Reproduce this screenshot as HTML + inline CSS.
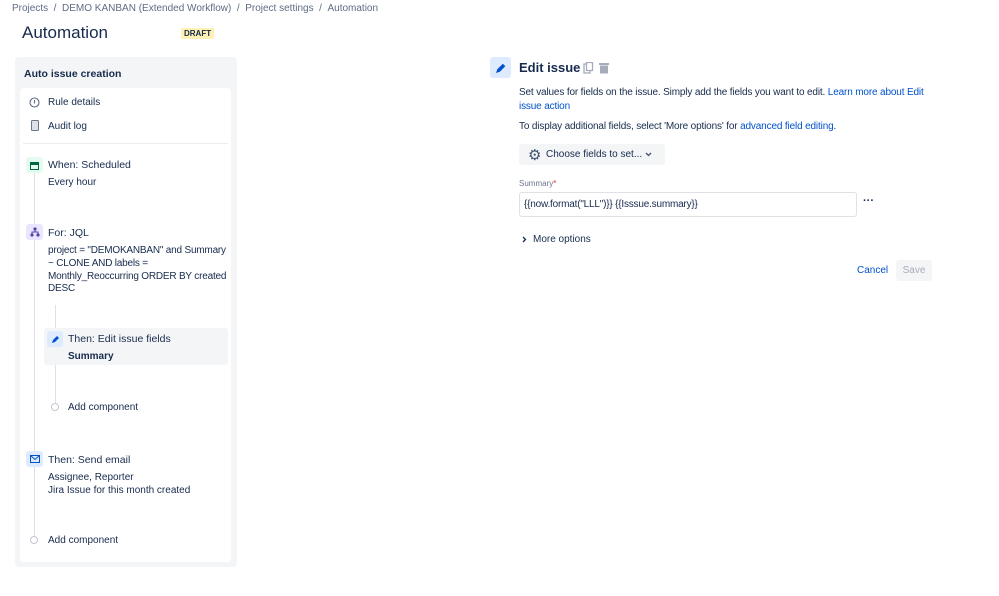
<!DOCTYPE html>
<html><head><style>
*{margin:0;padding:0;box-sizing:border-box}
body{width:999px;height:596px;background:#fff;font-family:"Liberation Sans",sans-serif;color:#172b4d;position:relative;overflow:hidden;font-size:10px}
.a{position:absolute;white-space:nowrap}
.ic{position:absolute;border-radius:3px;display:flex;align-items:center;justify-content:center}
.lnk{color:#0052cc}
.c{position:absolute;width:8px;height:8px;border:1px solid #c1c7d0;border-radius:50%;background:#fff}
</style></head><body>
<div class="a" style="left:12px;top:3px;color:#5e6c84;font-size:10px">Projects &nbsp;/ &nbsp;DEMO KANBAN (Extended Workflow) &nbsp;/ &nbsp;Project settings &nbsp;/ &nbsp;Automation</div>
<div class="a" style="left:22px;top:23px;font-size:17px">Automation</div>
<div class="a" style="left:181px;top:28px;background:#fff0b3;font-size:8px;font-weight:bold;padding:1px 3px;border-radius:2px;color:#172b4d">DRAFT</div>

<div class="a" style="left:15px;top:57px;width:222px;height:510px;background:#f4f5f7;border-radius:4px"></div>
<div class="a" style="left:24px;top:68px;font-weight:bold;font-size:10.5px">Auto issue creation</div>
<div class="a" style="left:20px;top:88px;width:211px;height:474px;background:#fff;border-radius:4px"></div>

<svg class="a" style="left:29px;top:97px" width="11" height="11" viewBox="0 0 11 11"><circle cx="5.5" cy="5.5" r="4.5" fill="none" stroke="#5e6c84" stroke-width="1.1"/><path d="M5.5 3v3.5" stroke="#5e6c84" stroke-width="1.1"/></svg>
<div class="a" style="left:48px;top:97px">Rule details</div>
<svg class="a" style="left:31px;top:120px" width="8" height="11"><rect x=".5" y=".5" width="7" height="10" rx="1" fill="#dfe1e6" stroke="#6b778c"/></svg>
<div class="a" style="left:48px;top:121px">Audit log</div>
<div class="a" style="left:23px;top:143px;width:205px;height:1px;background:#ebecf0"></div>

<div class="a" style="left:34px;top:173px;width:1px;height:363px;background:#dfe1e6"></div>
<div class="ic" style="left:26px;top:157px;width:17px;height:16px;background:#e3fcef"><svg width="9" height="9"><rect x=".5" y="1.5" width="8" height="7" fill="none" stroke="#006644"/><rect x="0" y="1" width="9" height="3" fill="#006644"/></svg></div>
<div class="a" style="left:48px;top:159px;font-size:10.5px">When: Scheduled</div>
<div class="a" style="left:48px;top:177px">Every hour</div>

<div class="ic" style="left:26px;top:224px;width:17px;height:16px;background:#eae6ff"><svg width="10" height="10"><circle cx="5" cy="2" r="1.6" fill="#5243aa"/><circle cx="2" cy="8" r="1.6" fill="#5243aa"/><circle cx="8" cy="8" r="1.6" fill="#5243aa"/><path d="M5 2v3M2 8V5h6v3" fill="none" stroke="#5243aa"/></svg></div>
<div class="a" style="left:48px;top:227px;font-size:10.5px">For: JQL</div>
<div class="a" style="left:48px;top:245px;line-height:12.8px;white-space:normal;width:182px;letter-spacing:-0.2px">project = "DEMOKANBAN" and Summary ~ CLONE AND labels = Monthly_Reoccurring ORDER BY created DESC</div>

<div class="a" style="left:55px;top:305px;width:1px;height:98px;background:#dfe1e6"></div>
<div class="a" style="left:44px;top:328px;width:184px;height:37px;background:#f4f5f7;border-radius:3px"></div>
<div class="ic" style="left:47px;top:331px;width:16px;height:16px;background:#deebff"><svg width="9" height="9" viewBox="0 0 9 9"><path d="M1 8l1-3 4-4 2 2-4 4z" fill="#0052cc"/></svg></div>
<div class="a" style="left:68px;top:333px;font-size:10.5px">Then: Edit issue fields</div>
<div class="a" style="left:68px;top:351px;font-weight:bold">Summary</div>
<div class="c" style="left:51px;top:403px"></div>
<div class="a" style="left:68px;top:402px">Add component</div>

<div class="ic" style="left:26px;top:451px;width:17px;height:16px;background:#deebff"><svg width="10" height="8"><rect x=".5" y=".5" width="9" height="7" fill="none" stroke="#0052cc"/><path d="M.5 .5l4.5 4 4.5-4" fill="none" stroke="#0052cc"/></svg></div>
<div class="a" style="left:48px;top:454px;font-size:10.5px">Then: Send email</div>
<div class="a" style="left:48px;top:472px">Assignee, Reporter</div>
<div class="a" style="left:48px;top:485px">Jira Issue for this month created</div>
<div class="c" style="left:30px;top:536px"></div>
<div class="a" style="left:48px;top:535px">Add component</div>

<div class="ic" style="left:490px;top:57px;width:21px;height:21px;background:#deebff"><svg width="12" height="12" viewBox="0 0 12 12"><path d="M1 11l1.3-3.8 5.5-5.5 2.5 2.5-5.5 5.5z" fill="#0052cc"/></svg></div>
<div class="a" style="left:519px;top:60px;font-size:13px;font-weight:bold">Edit issue</div>
<svg class="a" style="left:583px;top:62px" width="28" height="12"><rect x="1" y="2" width="6" height="9" fill="none" stroke="#a5adba" stroke-width="1.3"/><rect x="3.5" y="0.5" width="6" height="8" fill="#fff" stroke="#a5adba" stroke-width="1.3"/><rect x="16" y="1" width="10" height="2" fill="#a5adba"/><rect x="17" y="3.5" width="8" height="8" fill="#a5adba"/></svg>
<div class="a" style="left:519px;top:86px;line-height:14px;white-space:normal;width:405px;letter-spacing:-0.15px">Set values for fields on the issue. Simply add the fields you want to edit. <span class="lnk">Learn more about Edit issue action</span></div>
<div class="a" style="left:519px;top:121px;letter-spacing:-0.15px">To display additional fields, select 'More options' for <span class="lnk">advanced field editing</span>.</div>
<div class="a" style="left:519px;top:144px;width:146px;height:21px;background:#f4f5f7;border-radius:3px"></div>
<div class="a" style="left:528px;top:146px;font-size:15px;color:#42526e">&#9881;</div>
<div class="a" style="left:546px;top:149px;font-size:10px">Choose fields to set...</div>
<svg class="a" style="left:645px;top:152px" width="7" height="5"><path d="M1 1l2.5 2.5L6 1" fill="none" stroke="#42526e" stroke-width="1.3"/></svg>
<div class="a" style="left:519px;top:179px;font-size:8px;color:#6b778c">Summary<span style="color:#de350b">*</span></div>
<div class="a" style="left:519px;top:192px;width:338px;height:25px;border:1px solid #dfe1e6;border-radius:3px;background:#fff"></div>
<div class="a" style="left:524px;top:199px;letter-spacing:-0.2px">{{now.format("LLL")}} {{Isssue.summary}}</div>
<div class="a" style="left:863px;top:195px;font-size:11px;font-weight:bold">···</div>
<svg class="a" style="left:522px;top:236px" width="5" height="7"><path d="M1 1l2.5 2.5L1 6" fill="none" stroke="#172b4d" stroke-width="1.3"/></svg>
<div class="a" style="left:533px;top:234px">More options</div>
<div class="a lnk" style="left:857px;top:265px">Cancel</div>
<div class="a" style="left:896px;top:260px;width:36px;height:21px;background:#f4f5f7;border-radius:3px;color:#a5adba;text-align:center;line-height:21px">Save</div>
</body></html>
